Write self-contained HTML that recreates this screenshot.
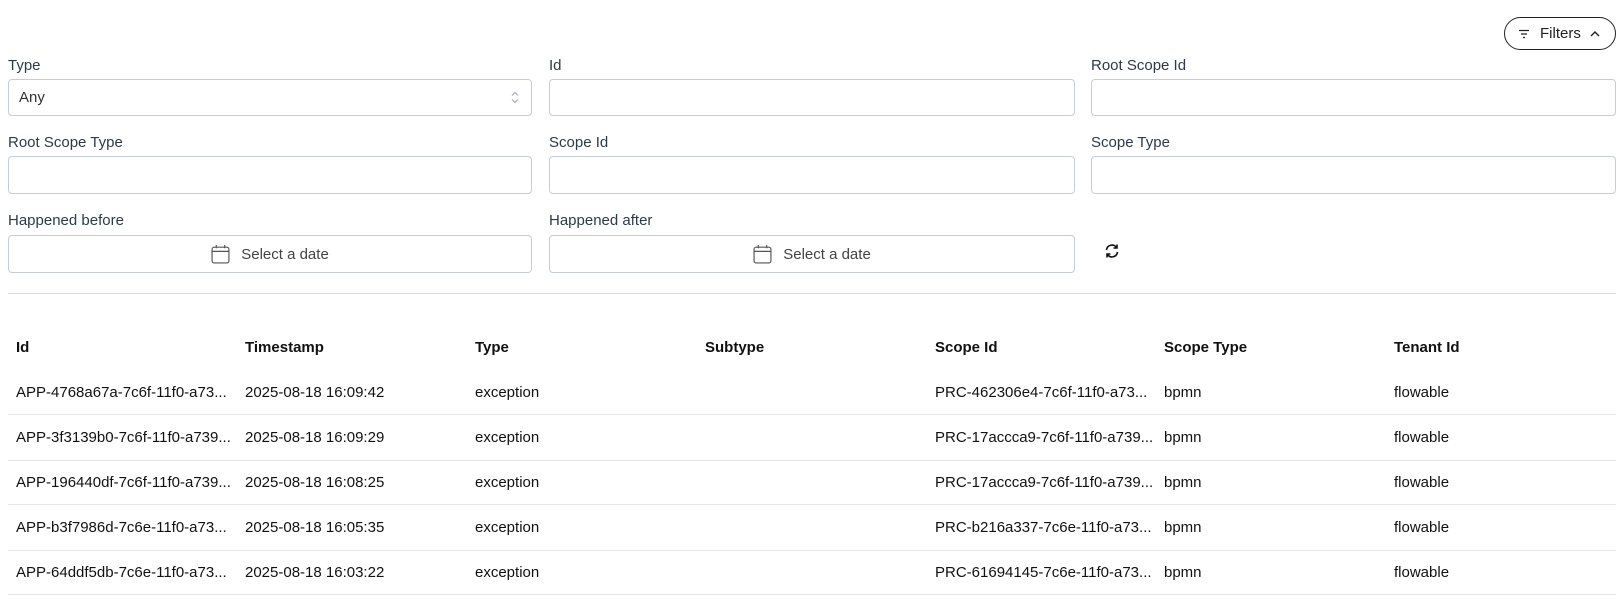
<!DOCTYPE html>
<html><head><style>
body{margin:0;width:1623px;height:602px;background:#fff;font-family:"Liberation Sans",sans-serif;color:#1f2937;position:relative;overflow:hidden}
.abs{position:absolute}
.lbl{position:absolute;font-size:15px;color:#2d3a4a}
.inp{position:absolute;height:37px;border:1px solid #c5ced6;border-radius:4px;box-sizing:border-box}
.dt{display:flex;align-items:center;justify-content:center;font-size:15px;color:#444}
.th{position:absolute;font-size:15px;font-weight:bold;color:#111}
.td{position:absolute;font-size:15px;color:#111;white-space:nowrap}
.line{position:absolute;left:8px;width:1608px;height:1px;background:#e3e6ea}
</style></head><body>
<div class="abs" style="left:1504px;top:17px;width:110px;height:31px;border:1px solid #222;border-radius:17px;display:flex;align-items:center;font-size:15px;color:#222">
<svg style="margin-left:13px" width="12" height="10" viewBox="0 0 12 10"><path d="M1 1.5H11M3 5H9M5 8.5H7" stroke="#222" stroke-width="1.3"/></svg>
<span style="margin-left:10px">Filters</span>
<svg style="margin-left:9px" width="10" height="7" viewBox="0 0 10 7"><path d="M1 6L5 2L9 6" stroke="#222" stroke-width="1.4" fill="none"/></svg>
</div>
<div class="lbl" style="left:8px;top:57px">Type</div>
<div class="lbl" style="left:549px;top:57px">Id</div>
<div class="lbl" style="left:1091px;top:57px">Root Scope Id</div>
<div class="inp" style="left:8px;top:79px;width:524px;font-size:15px;color:#333;padding:9px 0 0 10px">Any
<svg class="abs" style="right:12px;top:10px" width="8" height="15" viewBox="0 0 8 14"><path d="M1 5L4 2L7 5M1 9L4 12L7 9" stroke="#aab" stroke-width="1.2" fill="none"/></svg></div>
<div class="inp" style="left:549px;top:79px;width:526px"></div>
<div class="inp" style="left:1091px;top:79px;width:525px"></div>
<div class="lbl" style="left:8px;top:134px">Root Scope Type</div>
<div class="lbl" style="left:549px;top:134px">Scope Id</div>
<div class="lbl" style="left:1091px;top:134px">Scope Type</div>
<div class="inp" style="left:8px;top:156px;width:524px;height:38px"></div>
<div class="inp" style="left:549px;top:156px;width:526px;height:38px"></div>
<div class="inp" style="left:1091px;top:156px;width:525px;height:38px"></div>
<div class="lbl" style="left:8px;top:212px">Happened before</div>
<div class="lbl" style="left:549px;top:212px">Happened after</div>
<div class="inp dt" style="left:8px;top:235px;width:524px;height:38px"><svg width="19" height="20" viewBox="0 0 18 19" style="margin-right:11px"><rect x="1" y="3" width="16" height="15" rx="2" fill="none" stroke="#555" stroke-width="1.1"/><path d="M1 7H17M5 1V4M13 1V4" stroke="#555" stroke-width="1.1"/></svg>Select a date</div>
<div class="inp dt" style="left:549px;top:235px;width:526px;height:38px"><svg width="19" height="20" viewBox="0 0 18 19" style="margin-right:11px"><rect x="1" y="3" width="16" height="15" rx="2" fill="none" stroke="#555" stroke-width="1.1"/><path d="M1 7H17M5 1V4M13 1V4" stroke="#555" stroke-width="1.1"/></svg>Select a date</div>
<svg class="abs" style="left:1104px;top:243px" width="16" height="16" viewBox="0 0 16 16"><path d="M2.5 7A5.5 5.5 0 0 1 12.5 4.5M13.5 9A5.5 5.5 0 0 1 3.5 11.5" stroke="#111" stroke-width="1.6" fill="none"/><path d="M13 1.5V5H9.5M3 14.5V11H6.5" stroke="#111" stroke-width="1.6" fill="none"/></svg>
<div class="line" style="top:293px;background:#d5dade"></div>
<div class="th" style="left:16px;top:339px">Id</div>
<div class="th" style="left:245px;top:339px">Timestamp</div>
<div class="th" style="left:475px;top:339px">Type</div>
<div class="th" style="left:705px;top:339px">Subtype</div>
<div class="th" style="left:935px;top:339px">Scope Id</div>
<div class="th" style="left:1164px;top:339px">Scope Type</div>
<div class="th" style="left:1394px;top:339px">Tenant Id</div>

<div class="td" style="left:16px;top:384px">APP-4768a67a-7c6f-11f0-a73...</div><div class="td" style="left:245px;top:384px">2025-08-18 16:09:42</div><div class="td" style="left:475px;top:384px">exception</div><div class="td" style="left:935px;top:384px">PRC-462306e4-7c6f-11f0-a73...</div><div class="td" style="left:1164px;top:384px">bpmn</div><div class="td" style="left:1394px;top:384px">flowable</div>
<div class="line" style="top:414px"></div>
<div class="td" style="left:16px;top:429px">APP-3f3139b0-7c6f-11f0-a739...</div><div class="td" style="left:245px;top:429px">2025-08-18 16:09:29</div><div class="td" style="left:475px;top:429px">exception</div><div class="td" style="left:935px;top:429px">PRC-17accca9-7c6f-11f0-a739...</div><div class="td" style="left:1164px;top:429px">bpmn</div><div class="td" style="left:1394px;top:429px">flowable</div>
<div class="line" style="top:460px"></div>
<div class="td" style="left:16px;top:474px">APP-196440df-7c6f-11f0-a739...</div><div class="td" style="left:245px;top:474px">2025-08-18 16:08:25</div><div class="td" style="left:475px;top:474px">exception</div><div class="td" style="left:935px;top:474px">PRC-17accca9-7c6f-11f0-a739...</div><div class="td" style="left:1164px;top:474px">bpmn</div><div class="td" style="left:1394px;top:474px">flowable</div>
<div class="line" style="top:504px"></div>
<div class="td" style="left:16px;top:519px">APP-b3f7986d-7c6e-11f0-a73...</div><div class="td" style="left:245px;top:519px">2025-08-18 16:05:35</div><div class="td" style="left:475px;top:519px">exception</div><div class="td" style="left:935px;top:519px">PRC-b216a337-7c6e-11f0-a73...</div><div class="td" style="left:1164px;top:519px">bpmn</div><div class="td" style="left:1394px;top:519px">flowable</div>
<div class="line" style="top:550px"></div>
<div class="td" style="left:16px;top:564px">APP-64ddf5db-7c6e-11f0-a73...</div><div class="td" style="left:245px;top:564px">2025-08-18 16:03:22</div><div class="td" style="left:475px;top:564px">exception</div><div class="td" style="left:935px;top:564px">PRC-61694145-7c6e-11f0-a73...</div><div class="td" style="left:1164px;top:564px">bpmn</div><div class="td" style="left:1394px;top:564px">flowable</div>
<div class="line" style="top:594px"></div>
</body></html>
